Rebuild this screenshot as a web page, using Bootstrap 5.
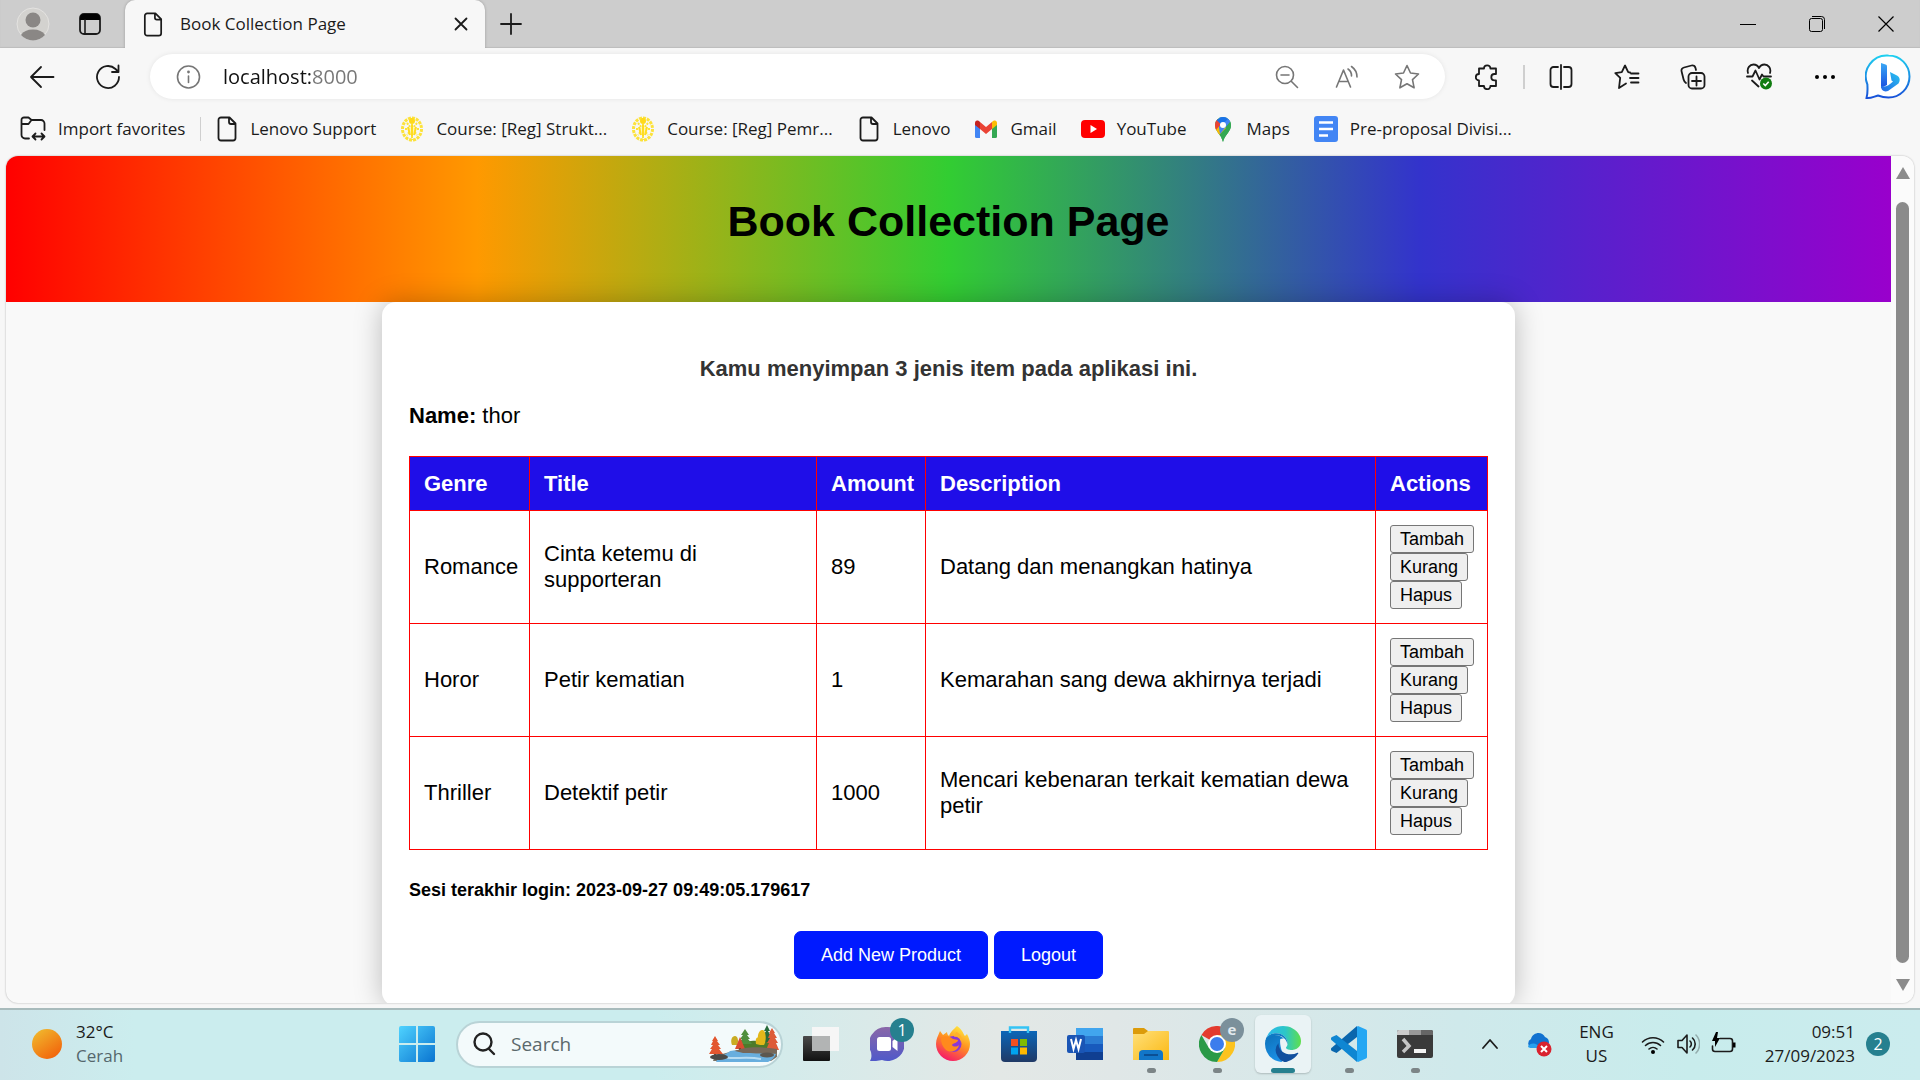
<!DOCTYPE html>
<html lang="id">
<head>
<meta charset="utf-8">
<meta name="viewport" content="width=device-width, initial-scale=1">
<title>Book Collection Page</title>
<link href="https://cdn.jsdelivr.net/npm/bootstrap@5.3.0/dist/css/bootstrap.min.css" rel="stylesheet">
<style>
  :root { --chrome: #f7f7f7; --teal: #26808f; }
  body { font-family: "Open Sans", "Noto Sans", sans-serif; font-size: 17px; line-height: 24px; color: #1b1b1b; background: var(--chrome); }
  svg { display: block; flex: none; }
  .bare { border: 0; background: none; padding: 0; color: inherit; display: flex; align-items: center; justify-content: center; flex: none; }
  .ln { fill: none; stroke: currentColor; stroke-width: 1.8; stroke-linecap: round; stroke-linejoin: round; }
  .thin { stroke-width: 1.6; }

  /* tab strip */
  .tab-strip { height: 48px; background: #cdcdcd; box-shadow: inset 0 -1px 1px #bdbdbd; }
  .strip-btn { width: 57px; height: 48px; }
  .new-tab { width: 52px; height: 48px; }
  .page-tab { width: 360px; height: 48px; background: var(--chrome); border-radius: 10px 10px 0 0; padding: 0 14px 0 18px; box-shadow: 0 0 3px #00000040; clip-path: inset(0 -4px 0 -4px); margin-left: 7px; }
  .page-tab a { color: #1b1b1b; gap: 17px; }
  .win-btn { width: 69px; height: 48px; }

  /* toolbar */
  .tool-row { padding: 6px 2px 5px 9px; color: #1b1b1b; }
  .tool-btn { width: 66px; height: 45px; }
  .bing-btn { width: 60px; height: 45px; }
  .address { height: 45px; border-radius: 23px; background: #fff; box-shadow: 0 0 5px #00000014; margin: 0 9px; padding: 0 8px 0 26px; color: #767676; }
  .address input { font-size: 20px; border: 0; outline: 0; padding: 0; margin-left: 22px; min-width: 0; color: transparent; background: linear-gradient(90deg, #111 88px, #767676 88px); -webkit-background-clip: text; background-clip: text; }
  .pill-btn { width: 60px; height: 45px; }
  .rule { width: 2px; height: 24px; background: #cfcfcf; flex: none; margin: 0 3px; }

  /* favourites */
  .fav-row { height: 52px; padding: 0 20px 2px; gap: 24px; }
  .fav-row a { color: #1b1b1b; gap: 12px; white-space: nowrap; }
  .fav-row .rule { width: 1px; margin: 0 -9px; }

  /* page viewport */
  .viewport { margin: 0 6px 5px; border-radius: 12px; overflow: hidden; min-height: 0; background: #f9f9f9; box-shadow: 0 0 2px #00000050; }
  .scroller { width: 23px; padding: 11px 0 12px; background: #fbfbfb; color: #8b8b8b; }
  .thumb { width: 13px; border-radius: 7px; background: #8b8b8b; margin: 23px 0 16px; }

  .app { font-family: "Liberation Sans", Arial, sans-serif; font-size: 22px; line-height: 26px; color: #000; overflow: hidden; }
  .rainbow { background: linear-gradient(to right, #f00, #f90, #32cd32, #33c, #90c); padding: 40px 0 56px; }
  .rainbow h1 { font-size: 43px; line-height: 50px; font-weight: 700; }
  .panel { max-width: 1133px; border-radius: 14px; padding: 27px; background: #fff; box-shadow: 0 0 28px #00000040; }
  .panel h2 { font-size: 22px; line-height: 26px; font-weight: 700; color: #333; margin: 27px 0 21px; }
  .panel h3 { font-size: 18px; line-height: 22px; font-weight: 700; margin: 29px 0 30px; }
  .books { --bs-table-color: #000; --bs-table-bg: transparent; table-layout: fixed; border-color: #f00; margin: 27px 0 0; }
  .books > :not(caption) > * > * { padding: 14px 12px 14px 14px; vertical-align: middle; }
  .books > thead > tr > th { background: #1f0ee8; color: #fff; line-height: 25px; font-weight: 700; }
  .w-genre { width: 120px; } .w-title { width: 287px; } .w-amount { width: 109px; } .w-actions { width: 112px; }
  .act { font-size: 18px; line-height: 22px; padding: 2px 9px; border: 1px solid #767676; border-radius: 3px; background: #efefef; color: #000; }
  .cta { font-size: 18px; line-height: 22px; padding: 12px 26px; border-radius: 7px; --bs-btn-bg: #001aff; --bs-btn-border-color: #001aff; }
  .cta-row { gap: 6px; }

  /* taskbar */
  .taskbar { height: 72px; padding-bottom: 2px; border-top: 2px solid #a8bbbc; background: linear-gradient(90deg, #cde4e9 0, #cbedee 7%, #cbedee 34%, #e3e8e6 52%, #e0e7e7 58%, #cfe9eb 76%, #c8ecec 88%, #cbecee 100%); }
  .weather { width: 20%; padding-left: 32px; gap: 14px; }
  .muted-ink { color: #55676c; }
  .search-pill { width: 327px; height: 47px; border-radius: 24px; border: 2px solid #b9d3d6; background: #f3fafb; margin: 0 5px 0 6px; padding: 0 2px 0 14px; gap: 15px; overflow: hidden; }
  .search-pill input { font-size: 19px; border: 0; outline: 0; background: none; padding: 0; min-width: 0; }
  .search-pill input::placeholder { color: #5b686b; opacity: 1; }
  .app-btn { width: 66px; height: 58px; position: relative; }
  .running::after { content: ""; position: absolute; bottom: 0; left: 50%; margin-left: -4px; width: 9px; height: 5px; border-radius: 3px; background: #7c8587; }
  .active-app { width: 56px; margin: 0 5px; border-radius: 6px; background: #eaf3f5; box-shadow: 0 1px 2px #0003; }
  .active-app::after { width: 24px; margin-left: -12px; background: var(--teal); }
  .count { position: absolute; top: 3px; left: 36px; width: 24px; height: 24px; border-radius: 12px; background: var(--teal); color: #fff; font-size: 16px; line-height: 24px; text-align: center; }
  .profile-dot { background: #7b909b; color: #e3eaee; font-size: 15px; font-weight: 700; line-height: 22px; }
  .tray { gap: 11px; padding-right: 30px; }
  .clock { margin-left: 18px; }
  .note-count { position: static; }
</style>
</head>
<body class="vh-100 d-flex flex-column overflow-hidden">

<svg width="0" height="0" class="position-absolute" aria-hidden="true">
  <symbol id="doc" viewBox="0 0 20 26"><path class="ln" d="M4 1.500h8.500L18.500 7.500V22a2.500 2.500 0 0 1-2.500 2.500H4A2.500 2.500 0 0 1 1.500 22V4A2.500 2.500 0 0 1 4 1.500zM12 2v4a2 2 0 0 0 2 2h4"/></symbol>
  <symbol id="crest" viewBox="0 0 24 26"><g fill="none" stroke="#fce23a"><ellipse cx="12" cy="13" rx="9.500" ry="11" stroke-width="3" stroke-dasharray="3 1"/><path stroke-width="2" d="M12 2v22M7 7l10 12M17 7 7 19M5 13h14" stroke-dasharray="2 1"/></g><circle cx="12" cy="5" r="3" fill="#ffd91a"/><circle cx="12" cy="14" r="3" fill="#fff6b0"/><path d="M8 11l2 8M16 11l-2 8M12 9v11" stroke="#ffdc20" stroke-width="2"/></symbol>
</svg>

<header class="flex-shrink-0">
  <div class="tab-strip d-flex align-items-center">
    <div class="d-flex ps-1 me-auto align-items-center">
      <button class="bare strip-btn" aria-label="Profile"><svg width="34" height="34" viewBox="0 0 34 34"><circle cx="17" cy="17" r="16" fill="#d3d2cf" stroke="#e4e3e1"/><circle cx="17" cy="13" r="7.500" fill="#8a8785"/><path d="M5 28a13 9 0 0 1 24 0 16 16 0 0 1-24 0z" fill="#8a8785"/></svg></button>
      <button class="bare strip-btn" aria-label="Tab actions"><svg width="22" height="22" viewBox="0 0 22 22"><rect x="1" y="1" width="20" height="20" rx="4" class="ln"/><path d="M1 7V5a4 4 0 0 1 4-4h12a4 4 0 0 1 4 4v2z"/><path d="M6 7v14" class="ln thin"/></svg></button>
      <div class="page-tab d-flex align-items-center">
        <a href="#" class="d-flex align-items-center text-decoration-none me-auto"><svg width="20" height="25"><use href="#doc"/></svg>Book Collection Page</a>
        <button class="bare" aria-label="Close tab"><svg width="20" height="20" viewBox="0 0 20 20"><path class="ln" d="M4.500 4.500l11 11M15.500 4.500l-11 11"/></svg></button>
      </div>
      <button class="bare new-tab" aria-label="New tab"><svg width="24" height="24" viewBox="0 0 24 24"><path class="ln" d="M12 2v20M2 12h20"/></svg></button>
    </div>
    <button class="bare win-btn" aria-label="Minimize"><svg width="16" height="16"><path d="M0 8.500h16" stroke="#000"/></svg></button>
    <button class="bare win-btn" aria-label="Restore"><svg width="16" height="16" viewBox="0 0 16 16" fill="none" stroke="#000"><rect x=".5" y="2.500" width="13" height="13" rx="2"/><path d="M3 .5h9.500a3 3 0 0 1 3 3V13"/></svg></button>
    <button class="bare win-btn" aria-label="Close"><svg width="16" height="16"><path d="M.5.500l15 15M15.500.500l-15 15" stroke="#000" stroke-width="1.200"/></svg></button>
  </div>

  <div class="tool-row d-flex align-items-center">
    <button class="bare tool-btn" aria-label="Back"><svg width="26" height="24" viewBox="0 0 26 24"><path class="ln" d="M24.500 12H2M12 2 2 12l10 10"/></svg></button>
    <button class="bare tool-btn" aria-label="Reload"><svg width="26" height="26" viewBox="0 0 26 26"><path class="ln" d="M24 13a11 11 0 1 1-3.500-8l2.500 2.500M23.500 1.500v6.500h-6.500"/></svg></button>
    <div class="address d-flex align-items-center flex-grow-1">
      <svg width="25" height="26" viewBox="0 0 25 26"><circle cx="12.500" cy="13" r="11" class="ln thin"/><path d="M12.500 12v6.500" class="ln thin"/><circle cx="12.500" cy="8" r="1.400" fill="currentColor"/></svg>
      <input class="flex-grow-1" type="text" aria-label="Address" value="localhost:8000">
      <button class="bare pill-btn" aria-label="Zoom out"><svg width="24" height="24" viewBox="0 0 24 24"><path class="ln thin" d="M16.500 16.500 22.500 22.500M6 10h8"/><circle cx="10" cy="10" r="8.500" class="ln thin"/></svg></button>
      <button class="bare pill-btn" aria-label="Read aloud"><svg width="24" height="24" viewBox="0 0 24 24"><path class="ln thin" d="M1.500 22 8.500 5l7 17M4 16.500h9M13 4a8 8 0 0 1 3.500 7M16.500 1.500A13 13 0 0 1 22 12"/></svg></button>
      <button class="bare pill-btn" aria-label="Add to favorites"><svg width="26" height="26" viewBox="0 0 26 26"><path class="ln thin" d="M13 1.500l3.500 7.500 8 1-6 5.600 1.600 8.200L13 19.800l-7.100 4 1.600-8.200-6-5.600 8-1z"/></svg></button>
    </div>
    <button class="bare tool-btn" aria-label="Extensions"><svg width="24" height="26" viewBox="0 0 24 26"><path class="ln" d="M4 4.500h5a3.200 3.200 0 0 1 6.400 0H21v5.500h-1.500a3.200 3.200 0 0 0 0 6.400H21v5.600h-5.600a3.200 3.200 0 0 1-6.400 0H4v-5.600a3.200 3.200 0 0 1 0-6.400z"/></svg></button>
    <span class="rule"></span>
    <button class="bare tool-btn" aria-label="Split screen"><svg width="24" height="26" viewBox="0 0 24 26"><path class="ln" d="M9 3H4.500A3 3 0 0 0 1.500 6v14a3 3 0 0 0 3 3H9M12 1v24M15 3h4.500a3 3 0 0 1 3 3v14a3 3 0 0 1-3 3H15"/></svg></button>
    <button class="bare tool-btn" aria-label="Favorites"><svg width="26" height="26" viewBox="0 0 26 26"><path class="ln" d="M16 8.500l-1.800-.3L11 1.500 7.800 8.200l-6.500.900 4.900 4.800L5 24l7-4.500M17 9.500h7.500M16 14h8.500M17 18.500h7.500"/></svg></button>
    <button class="bare tool-btn" aria-label="Collections"><svg width="26" height="26" viewBox="0 0 26 26"><path class="ln" d="M6 19c-1.500-1-2-2-2.400-3.500L1.600 7.500C1 5.500 2 4 4 3.500L11.500 1.500c2-.5 3.500.500 4 2.500l.5 2"/><rect x="8.500" y="9" width="16" height="15.500" rx="3.500" class="ln"/><path class="ln" d="M16.500 12.500v9M12 17h9"/></svg></button>
    <button class="bare tool-btn" aria-label="Browser essentials"><svg width="26" height="27" viewBox="0 0 26 27"><path class="ln" d="M2 10C.5 5 4 1.500 7.500 1.500c2.500 0 4.500 1.500 5.500 3.500 1-2 3-3.500 5.500-3.500C22 1.500 25.500 5 24 10M1 13.500h5.500l3-6 4 9 2.500-5 1.500 2H25M6 17.500l6.500 6"/><circle cx="20" cy="20.500" r="6" fill="#107c10"/><path d="M17.300 20.500l2 2 3.400-3.800" fill="none" stroke="#fff" stroke-width="1.600"/></svg></button>
    <button class="bare tool-btn" aria-label="Settings and more"><svg width="22" height="6"><circle cx="3" cy="3" r="2"/><circle cx="11" cy="3" r="2"/><circle cx="19" cy="3" r="2"/></svg></button>
    <button class="bare bing-btn" aria-label="Bing chat"><svg width="46" height="46" viewBox="0 0 46 46"><defs><linearGradient id="bg" x2="0" y2="1"><stop stop-color="#1fd0f0"/><stop offset="1" stop-color="#1850d8"/></linearGradient><linearGradient id="bb" x2="0" y2="1"><stop stop-color="#3aa8f5"/><stop offset="1" stop-color="#1a4fe0"/></linearGradient><linearGradient id="bc" x1="1" x2="0" y2="1"><stop stop-color="#27c4f0"/><stop offset="1" stop-color="#2466e6"/></linearGradient></defs><path d="M23.500 1.500a21 21 0 1 1 0 42c-5 0-8-1-10.500-2-4 1-7 3-11.500 2.500 1.500-5 1-8.500.9-13.500A21 21 0 0 1 23.500 1.500z" fill="#fff" stroke="url(#bg)" stroke-width="2"/><path d="M16 9l4.500 1.500c1 .4 1.500 1 1.500 2V31l-6 3z" fill="url(#bb)"/><path d="M25 18l7 3.500c3 1.500 3.500 5 1.500 8L23 37c-4 1.500-7-1-7-5 4 1.500 8-.5 12-4.500l-1.500-1z" fill="url(#bc)"/></svg></button>
  </div>

  <nav class="fav-row d-flex align-items-center" aria-label="Favorites">
    <a href="#" class="d-flex align-items-center text-decoration-none"><svg width="26" height="26" viewBox="0 0 26 26"><path class="ln" d="M9 22.500H5A3.500 3.500 0 0 1 1.500 19V4A2.500 2.500 0 0 1 4 1.500h4.500L11.500 4H21a3.500 3.500 0 0 1 3.500 3.500V14M1.500 8h7l3-4M13 20.500h11M15.500 17.500l-3 3 3 3M21.500 17.500l3 3-3 3"/></svg>Import favorites</a>
    <span class="rule"></span>
    <a href="#" class="d-flex align-items-center text-decoration-none"><svg width="22" height="26"><use href="#doc"/></svg>Lenovo Support</a>
    <a href="#" class="d-flex align-items-center text-decoration-none"><svg width="24" height="26"><use href="#crest"/></svg>Course: [Reg] Strukt...</a>
    <a href="#" class="d-flex align-items-center text-decoration-none"><svg width="24" height="26"><use href="#crest"/></svg>Course: [Reg] Pemr...</a>
    <a href="#" class="d-flex align-items-center text-decoration-none"><svg width="24" height="26"><use href="#doc"/></svg>Lenovo</a>
    <a href="#" class="d-flex align-items-center text-decoration-none"><svg width="24" height="18" viewBox="0 0 24 18"><path fill="#4285f4" d="M1 3h5v15H2.500A1.500 1.500 0 0 1 1 16.500z"/><path fill="#34a853" d="M18 3h5v13.500a1.500 1.500 0 0 1-1.500 1.500H18z"/><path fill="#ea4335" d="M6 2l6 5 6-5v7l-6 5-6-5z"/><path fill="#c5221f" d="M1 3c0-2.500 2.500-3.500 5-1v7L1 5z"/><path fill="#fbbc04" d="M23 3c0-2.500-2.500-3.500-5-1v7l5-4z"/></svg>Gmail</a>
    <a href="#" class="d-flex align-items-center text-decoration-none"><svg width="24" height="18" viewBox="0 0 24 18"><rect width="24" height="18" rx="4" fill="#f00"/><path d="M9.500 5v8l6.500-4z" fill="#fff"/></svg>YouTube</a>
    <a href="#" class="d-flex align-items-center text-decoration-none"><svg width="24" height="26" viewBox="0 0 24 26"><defs><clipPath id="pin"><path d="M12 1a8 8 0 0 1 8 8c0 7-6 9-8 17-2-8-8-10-8-17a8 8 0 0 1 8-8z"/></clipPath></defs><g clip-path="url(#pin)"><path fill="#34a853" d="M0 0h24v26H0z"/><path fill="#fbbc04" d="M0 12 12 8l3 4L5 22z"/><path fill="#4285f4" d="M8 0h16L9 18l-1-6z"/><path fill="#34a853" d="M20 5.500V26H8z"/><path fill="#ea4335" d="M0 12V0l6 3 5 4-6 7z"/><path fill="#1a73e8" d="M5.500 4 12 0l5 3-6.500 6z"/></g><circle cx="12" cy="9" r="3" fill="#fff"/></svg>Maps</a>
    <a href="#" class="d-flex align-items-center text-decoration-none"><svg width="24" height="26" viewBox="0 0 24 26"><rect width="24" height="26" rx="3" fill="#4285f4"/><path d="M5 6.500h14M5 13h14M5 19.500h9" stroke="#fff" stroke-width="2.600"/></svg>Pre-proposal Divisi...</a>
  </nav>
</header>

<div class="viewport d-flex flex-grow-1">
  <main class="app flex-grow-1">
    <div class="rainbow text-center"><h1 class="m-0">Book Collection Page</h1></div>
    <section class="panel mx-auto">
      <h2 class="text-center">Kamu menyimpan 3 jenis item pada aplikasi ini.</h2>
      <p class="m-0"><b>Name:</b> thor</p>
      <table class="table table-bordered books">
        <thead><tr><th class="w-genre">Genre</th><th class="w-title">Title</th><th class="w-amount">Amount</th><th>Description</th><th class="w-actions">Actions</th></tr></thead>
        <tbody>
          <tr><td>Romance</td><td>Cinta ketemu di supporteran</td><td>89</td><td>Datang dan menangkan hatinya</td>
            <td><div class="d-flex flex-column align-items-start"><button class="act">Tambah</button><button class="act">Kurang</button><button class="act">Hapus</button></div></td></tr>
          <tr><td>Horor</td><td>Petir kematian</td><td>1</td><td>Kemarahan sang dewa akhirnya terjadi</td>
            <td><div class="d-flex flex-column align-items-start"><button class="act">Tambah</button><button class="act">Kurang</button><button class="act">Hapus</button></div></td></tr>
          <tr><td>Thriller</td><td>Detektif petir</td><td>1000</td><td>Mencari kebenaran terkait kematian dewa petir</td>
            <td><div class="d-flex flex-column align-items-start"><button class="act">Tambah</button><button class="act">Kurang</button><button class="act">Hapus</button></div></td></tr>
        </tbody>
      </table>
      <h3>Sesi terakhir login: 2023-09-27 09:49:05.179617</h3>
      <div class="cta-row d-flex justify-content-center"><button class="btn btn-primary cta">Add New Product</button><button class="btn btn-primary cta">Logout</button></div>
    </section>
  </main>
  <div class="scroller d-flex flex-column align-items-center flex-shrink-0" aria-hidden="true">
    <svg width="14" height="12"><path d="M7 0l7 12H0z" fill="currentColor"/></svg>
    <div class="thumb flex-grow-1"></div>
    <svg width="14" height="12"><path d="M0 0h14L7 12z" fill="currentColor"/></svg>
  </div>
</div>

<footer class="taskbar d-flex align-items-center flex-shrink-0">
  <div class="weather d-flex align-items-center flex-shrink-0">
    <svg width="30" height="30"><defs><linearGradient id="sun" x2=".7" y2="1"><stop stop-color="#f0c030"/><stop offset="1" stop-color="#f2650c"/></linearGradient></defs><circle cx="15" cy="15" r="15" fill="url(#sun)"/></svg>
    <div><div>32°C</div><div class="muted-ink">Cerah</div></div>
  </div>
  <button class="bare app-btn" aria-label="Start"><svg width="36" height="36" viewBox="0 0 36 36"><defs><linearGradient id="win" x2="1" y2="1"><stop stop-color="#4fd3ff"/><stop offset="1" stop-color="#0a74d0"/></linearGradient></defs><path fill="url(#win)" d="M2 0h15v17H0V2a2 2 0 0 1 2-2zM19 0h15a2 2 0 0 1 2 2v15H19zM0 19h17v17H2a2 2 0 0 1-2-2zM19 19h17v15a2 2 0 0 1-2 2H19z"/></svg></button>
  <div class="search-pill d-flex align-items-center flex-shrink-0">
    <svg width="24" height="24" viewBox="0 0 24 24"><g fill="none" stroke="#222" stroke-width="2.400" stroke-linecap="round"><circle cx="11" cy="10" r="8.500"/><path d="M17 17l5 5"/></g></svg>
    <input class="flex-grow-1" type="search" aria-label="Search" placeholder="Search">
    <svg width="70" height="38" viewBox="0 0 70 38"><path d="M6 31l22-6 40-1v8l-6 4H4z" fill="#7b7364"/><path d="M7 37c2-6 10-7 14-11 6-2 12 2 20 2 8 1 16 0 26 1-2 4-4 6-8 8z" fill="#68aede"/><path d="M14 32c10 3 22-1 38 2" stroke="#b7dcf2" stroke-width="2" fill="none"/><path d="M28 22c6-5 12-7 20-6l8-4 10 3v9H30z" fill="#4d7a2a"/><path d="M36 4l4 6h-2l3 4h-2l4 5H29l4-5h-2l3-4h-2z" fill="#4f8f3d"/><path d="M58 0l3 6h-2l3 5h-2l3 6H53l3-6h-2l3-5h-2z" fill="#276a3a"/><path d="M23 20c-2-5 0-9 3-9s4 6 2 9z" fill="#c9ac22"/><path d="M51 20c-4-7-2-14 2-15s5 10 2 15zM47 19c-1-6 1-8 4-5v6z" fill="#e2b71a"/><path d="M31 12l5 12H26z" fill="#d94b30"/><path d="M30 23h2v4h-2zM5 27h2v5H5z" fill="#7c4a2a"/><path d="M6 11l3 5H8l3 4H9l3 4h-2l4 5H0l3-5H1l3-4H2l2-4H3z" fill="#e2562f"/><path d="M63 3l3 5h-1l3 5h-2l3 5h-2l3 7H57l3-7h-2l3-5h-2l2-5h-1z" fill="#dd5b38"/><path d="M26 26c8-4 24-5 42-2v4H34z" fill="#76685a"/><ellipse cx="10" cy="32" rx="9" ry="3" fill="#4a4a48"/><ellipse cx="58" cy="30" rx="7" ry="2.500" fill="#5c5750"/></svg>
  </div>
  <button class="bare app-btn" aria-label="Task view"><svg width="36" height="36" viewBox="0 0 36 36"><defs><linearGradient id="dk" x2="0" y2="1"><stop stop-color="#4a4a4a"/><stop offset="1" stop-color="#111"/></linearGradient></defs><rect y="10" width="27" height="25" rx="1" fill="url(#dk)"/><path d="M9 1h27v24H9z" fill="#f6f6f6"/><path d="M9 10h18v15H9z" fill="#b2b4b4"/></svg></button>
  <button class="bare app-btn" aria-label="Chat"><svg width="34" height="36" viewBox="0 0 34 36"><defs><linearGradient id="ch" x2="0" y2="1"><stop stop-color="#8a67a8"/><stop offset="1" stop-color="#5059c9"/></linearGradient></defs><path d="M17 1a17 17 0 1 1-5 33c-4 1-8 1-12 1 2-4 1.500-6 1-9A17 17 0 0 1 17 1z" fill="url(#ch)"/><rect x="7" y="11" width="14" height="14" rx="2.500" fill="#fff"/><path d="M22.500 15l5-4v14l-5-4z" fill="#fff"/></svg><span class="count">1</span></button>
  <button class="bare app-btn" aria-label="Firefox"><svg width="34" height="36" viewBox="0 0 34 36"><defs><linearGradient id="ff" x1=".8" y1="0" x2=".3" y2="1"><stop stop-color="#fff044"/><stop offset=".45" stop-color="#ff9420"/><stop offset="1" stop-color="#f5156c"/></linearGradient></defs><path d="M21 0c6 4 6 8 8 10l2-2c2 4 3 7 3 10a17 17 0 1 1-34 0c0-5 2-8 4-13l3 4 4-3c0 2 1 3 2 4 2-5 5-7 8-10z" fill="url(#ff)"/><circle cx="17.500" cy="18" r="8" fill="#8a37d6"/><path d="M5 12c4-3 9-2 12 1l5 1c0 3-5 3-6 5 1 2 5 2 7 0-1 6-9 9-14 4-3-3-4-7-4-11z" fill="#ff8a1c"/><path d="M18 11c4-1 7 2 7 6 2-5-1-10-5-11z" fill="#ffb02a"/></svg></button>
  <button class="bare app-btn" aria-label="Microsoft Store"><svg width="36" height="36" viewBox="0 0 36 36"><defs><linearGradient id="st" x2="0" y2="1"><stop stop-color="#0b66b8"/><stop offset="1" stop-color="#203a66"/></linearGradient></defs><path d="M0 5h36v27a4 4 0 0 1-4 4H4a4 4 0 0 1-4-4z" fill="url(#st)"/><path d="M9 7V1.500h18V7" fill="none" stroke="#35c3f5" stroke-width="2.400"/><path fill="#f25022" d="M10 13h7v7h-7z"/><path fill="#7fba00" d="M19 13h7v7h-7z"/><path fill="#00a4ef" d="M10 21.500h7v7h-7z"/><path fill="#ffb900" d="M19 21.500h7v7h-7z"/></svg></button>
  <button class="bare app-btn" aria-label="Word"><svg width="36" height="34" viewBox="0 0 36 34"><path fill="#41a5ee" d="M9 1h27v8.500H9z"/><path fill="#2b7cd3" d="M9 9h27v8.500H9z"/><path fill="#185abd" d="M9 17h27v8H9z"/><path fill="#103f91" d="M9 25h27v8H9z"/><rect y="8" width="18" height="18" rx="2" fill="#1a55b5"/><path d="M4 12l2.500 10L9 13l2.500 9L14 12" fill="none" stroke="#fff" stroke-width="2"/></svg></button>
  <button class="bare app-btn running" aria-label="File Explorer"><svg width="36" height="34" viewBox="0 0 36 34"><defs><linearGradient id="fo" x2="1" y2="1"><stop stop-color="#ffe07a"/><stop offset="1" stop-color="#fbb812"/></linearGradient></defs><path d="M0 2a1 1 0 0 1 1-1h10l4 3v5H0z" fill="#dc9b0a"/><path d="M0 7h11l4-3h20a1 1 0 0 1 1 1v28H0z" fill="url(#fo)"/><path d="M6 33V27a4 4 0 0 1 4-4h16a4 4 0 0 1 4 4v6z" fill="#1276c8"/><path d="M11 28h14" stroke="#0b4f94" stroke-width="2"/></svg></button>
  <button class="bare app-btn running" aria-label="Chrome"><svg width="36" height="36" viewBox="0 0 36 36"><path fill="#e33b2e" d="M18 18 2.400 9a18 18 0 0 1 31.200 0z"/><path fill="#fcc31e" d="M18 18V9h15.600A18 18 0 0 1 18 36l7.800-13.500z"/><path fill="#2a9a47" d="M18 18l7.800 4.500L18 36A18 18 0 0 1 2.400 9l7.800 13.500z"/><circle cx="18" cy="18" r="9" fill="#fff"/><circle cx="18" cy="18" r="7" fill="#3b7ded"/></svg><span class="count profile-dot">e</span></button>
  <button class="bare app-btn running active-app" aria-label="Edge"><svg width="36" height="36" viewBox="0 0 16 16"><defs><linearGradient id="e1"><stop stop-color="#2bb8ee"/><stop offset=".55" stop-color="#2cc6c8"/><stop offset="1" stop-color="#5fdf4c"/></linearGradient><linearGradient id="e2" x2=".4" y2="1"><stop stop-color="#0d70b8"/><stop offset="1" stop-color="#1b8fe4"/></linearGradient></defs><path fill="url(#e1)" d="M9.482 9.341c-.069.062-.17.153-.17.309 0 .162.107.325.3.456.877.613 2.521.54 2.592.538h.002c.667 0 1.320-.18 1.894-.519A3.840 3.840 0 0 0 16 6.819c.018-1.316-.44-2.218-.666-2.664l-.04-.08C13.963 1.487 11.106 0 8 0A8 8 0 0 0 .473 5.290C1.488 4.048 3.183 3.262 5 3.262c2.830 0 5.010 1.885 5.010 4.797h-.004v.002c0 .338-.168.832-.487 1.244z"/><path fill="url(#e2)" d="M.01 7.753a8.137 8.137 0 0 0 .753 3.641 8 8 0 0 0 6.495 4.564C10 15 6 10 6.810 5.800c.4-.3.900-.3 1.586-.268a4.037 4.037 0 0 0-.993-.698C6.348 4.282 5.199 4.100 5 4.100 2 3.200.2 5 .01 7.753z"/><path fill="#0f7ac4" d="M.473 5.290C1.488 4.048 3.183 3.262 5 3.262c2.830 0 5.010 1.885 5.010 4.797C9 4.800 7 4.300 5 4.263 2.560 4.263.2 6 .01 7.753z"/><path fill="#114f9e" d="M10.228 15.667a8.020 8.020 0 0 0 4.547-3.411.25.25 0 0 0-.331-.35 6.367 6.367 0 0 1-2.906.694c-2.957 0-5.532-2.031-5.532-4.644.002-.135.017-.268.046-.399a4.543 4.543 0 0 0-.46 5.898c.9 1.300 1.600 2.200 3 2.500.7.100 1 .1 1.636-.288z"/></svg></button>
  <button class="bare app-btn running" aria-label="Visual Studio Code"><svg width="36" height="36" viewBox="0 0 36 36"><path d="M26 0v11L5.500 27 1 25a2 2 0 0 1 0-3.500z" fill="#0a66ad"/><path d="M26 36V25L5.500 9 1 11a2 2 0 0 0 0 3.500z" fill="#0f86d2"/><path d="M27 0l8 3.500a2 2 0 0 1 1 2v25a2 2 0 0 1-1 2L27 36c-1 0-1-1-1-2V2c0-1 0-2 1-2z" fill="#25a7f3"/></svg></button>
  <button class="bare app-btn running" aria-label="Terminal"><svg width="36" height="28" viewBox="0 0 36 28"><rect width="36" height="28" rx="2" fill="#3a3a3a"/><path d="M2 0h10v5H0V2a2 2 0 0 1 2-2z" fill="#ccc"/><path d="M12 0h12v5H12z" fill="#999"/><path d="M24 0h10a2 2 0 0 1 2 2v3H24z" fill="#666"/><path d="M6 9l6 7-6 6" fill="none" stroke="#c4c4c4" stroke-width="3.500"/><path d="M17 21h12" stroke="#f4f4f4" stroke-width="4"/></svg></button>

  <div class="tray d-flex align-items-center ms-auto">
    <button class="bare me-3" aria-label="Hidden icons"><svg width="18" height="12" viewBox="0 0 18 12"><path class="ln" d="M2 10l7-8 7 8"/></svg></button>
    <button class="bare me-3" aria-label="OneDrive"><svg width="26" height="26" viewBox="0 0 26 26"><path d="M5 17a5 5 0 0 1 0-9c2-7 11-8 14-2 3 1 4 3 4 6l-4 5z" fill="#1172d0"/><path d="M2 15c4-4 9-3 12 2H5c-2 0-3-1-3-2z" fill="#28a0ee"/><circle cx="18" cy="18" r="7.500" fill="#d9222f"/><path d="M15 15l6 6M21 15l-6 6" stroke="#fff" stroke-width="2"/></svg></button>
    <div class="text-center me-3">ENG<br>US</div>
    <svg width="24" height="22" viewBox="0 0 24 22"><g class="ln thin"><path d="M1.500 9a15 15 0 0 1 21 0M4.500 12.500a11 11 0 0 1 15 0M8 16a6 6 0 0 1 8 0"/></g><circle cx="12" cy="19" r="2"/></svg>
    <svg width="24" height="22" viewBox="0 0 24 22"><g class="ln thin"><path d="M2 7.500h4L11 2v18l-5-5.500H2zM14 8a4 4 0 0 1 0 6M16.500 5a8 8 0 0 1 0 12"/><path d="M20 2a13 13 0 0 1 0 18" opacity=".3"/></g></svg>
    <svg width="25" height="24" viewBox="0 0 25 24"><path class="ln thin" d="M9 6.500h10A2.500 2.500 0 0 1 21.500 9v8a2.500 2.500 0 0 1-2.500 2.500H4A2.500 2.500 0 0 1 1.500 17v-3"/><path d="M22 10.500h2.500v5H22zM5 0 1 9h3v6l5-9H6l1-6z"/></svg>
    <div class="clock text-end">09:51<br>27/09/2023</div>
    <span class="count note-count">2</span>
  </div>
</footer>

<script src="https://cdn.jsdelivr.net/npm/bootstrap@5.3.0/dist/js/bootstrap.bundle.min.js"></script>
</body>
</html>
